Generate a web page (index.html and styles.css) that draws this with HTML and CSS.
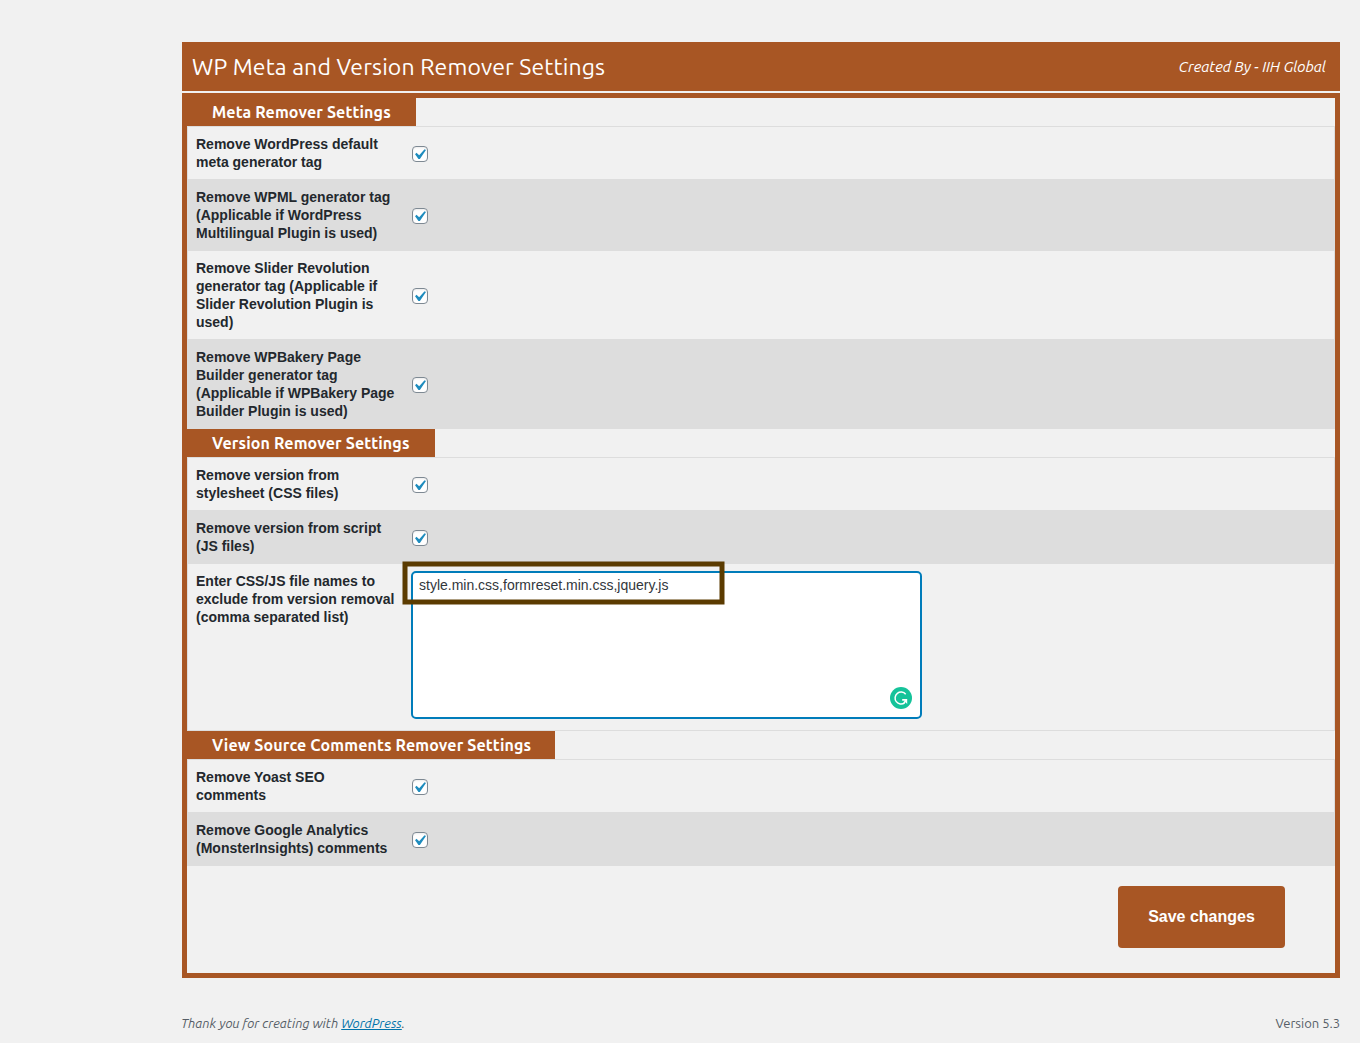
FILE: index.html
```html
<!DOCTYPE html>
<html lang="en">
<head>
<meta charset="utf-8">
<title>WP Meta and Version Remover Settings</title>
<link rel="stylesheet" href="styles.css">
</head>
<body>
<svg class="defs" aria-hidden="true"><symbol id="check" viewBox="0 0 20 20"><path d="M14.83 4.89l1.34.94-5.81 8.38H9.02L5.78 9.67l1.34-1.25 2.57 2.4z"/></symbol></svg>
<main class="wrap">
  <header class="banner">
    <h1 class="banner-title">WP Meta and Version Remover Settings</h1>
    <span class="banner-by">Created By - IIH Global</span>
  </header>
  <form class="panel">
    <h2 class="tab tab-meta">Meta Remover Settings</h2>
    <div class="table">
      <div class="row"><label class="label">Remove WordPress default meta generator tag</label><span class="box"><svg class="tick"><use href="#check"/></svg></span></div>
      <div class="row alt"><label class="label">Remove WPML generator tag (Applicable if WordPress Multilingual Plugin is used)</label><span class="box"><svg class="tick"><use href="#check"/></svg></span></div>
      <div class="row"><label class="label">Remove Slider Revolution generator tag (Applicable if Slider Revolution Plugin is used)</label><span class="box"><svg class="tick"><use href="#check"/></svg></span></div>
      <div class="row alt"><label class="label">Remove WPBakery Page Builder generator tag (Applicable if WPBakery Page Builder Plugin is used)</label><span class="box"><svg class="tick"><use href="#check"/></svg></span></div>
    </div>
    <h2 class="tab tab-version">Version Remover Settings</h2>
    <div class="table closed">
      <div class="row"><label class="label">Remove version from stylesheet (CSS files)</label><span class="box"><svg class="tick"><use href="#check"/></svg></span></div>
      <div class="row alt"><label class="label">Remove version from script (JS files)</label><span class="box"><svg class="tick"><use href="#check"/></svg></span></div>
      <div class="row tall"><label class="label">Enter CSS/JS file names to exclude from version removal (comma separated list)</label>
        <div class="field">style.min.css,formreset.min.css,jquery.js
          <svg class="highlight" viewBox="0 0 323 44"><rect x="3" y="3" width="317" height="38" fill="none" stroke="#5b3b00" stroke-width="5"/></svg>
          <svg class="grammar" viewBox="0 0 22 22"><circle cx="11" cy="11" r="11" fill="#15c39a"/><path d="M15.7 7.2A6 6 0 1 0 14.6 15.9" fill="none" stroke="#fff" stroke-width="1.5"/><path d="M12.2 11.9H17.2V16.9L15.6 15.3 14.3 16.4 13.4 15.2 14.7 13.7H12.2z" fill="#fff"/></svg>
        </div>
      </div>
    </div>
    <h2 class="tab tab-comments">View Source Comments Remover Settings</h2>
    <div class="table">
      <div class="row"><label class="label">Remove Yoast SEO comments</label><span class="box"><svg class="tick"><use href="#check"/></svg></span></div>
      <div class="row alt"><label class="label">Remove Google Analytics (MonsterInsights) comments</label><span class="box"><svg class="tick"><use href="#check"/></svg></span></div>
    </div>
    <div class="actions"><button class="save" type="button">Save changes</button></div>
  </form>
  <footer class="footer">
    <span class="thanks">Thank you for creating with <a class="link" href="#">WordPress</a>.</span>
    <span class="version">Version 5.3</span>
  </footer>
</main>
</body>
</html>
```
FILE: styles.css
```css
* { box-sizing: border-box; }
body { margin: 0; background: #f1f1f1; color: #23282d; font-family: Ubuntu, "Noto Sans", sans-serif; height: 1043px; overflow: hidden; }
.defs { display: none; }
.wrap { padding: 42px 20px 0 182px; }
.banner { height: 49px; padding: 0 14px 0 10px; background: #a85624; color: #fff; display: flex; align-items: center; justify-content: space-between; white-space: nowrap; }
.banner-title { margin: 0; font-size: 23px; font-weight: 400; line-height: 30px; letter-spacing: .14px; }
.banner-by { font-size: 15px; font-style: italic; }
.panel { margin-top: 2px; height: 885px; border: 5px solid #a85624; }
.tab { margin: 0; height: 28px; padding-left: 25px; background: #a85624; color: #fff; font-size: 16px; line-height: 28px; font-weight: 700; letter-spacing: .13px; white-space: nowrap; }
.tab-meta { width: 229px; }
.tab-version { width: 248px; }
.tab-comments { width: 368px; }
.table { border: 1px solid #ddd; border-bottom: 0; }
.table.closed { border-bottom: 1px solid #ddd; }
.row { display: flex; align-items: center; padding: 8px; font-family: "Liberation Sans", Arial, sans-serif; }
.row.alt { background: #ddd; padding: 9px 8px; }
.row.tall { align-items: flex-start; height: 166px; }
.label { width: 200px; margin-right: 16px; flex: none; font-size: 14px; line-height: 18px; font-weight: 700; }
.box { width: 16px; height: 16px; margin-top: 2px; border: 1px solid #7e8993; border-radius: 4px; background: #fff; display: flex; box-shadow: inset 0 1px 2px rgba(0,0,0,.08); }
.tick { width: 21px; height: 21px; margin: -3px 0 0 -4px; flex: none; fill: #1e8cbe; }
.field { position: relative; width: 511px; height: 148px; margin: -1px 0 0 -1px; padding: 2px 6px; background: #fff; border: 2px solid #007cba; border-radius: 5px; color: #32373c; font-size: 14px; line-height: 20px; }
.highlight { position: absolute; left: -11px; top: -12px; width: 323px; height: 44px; }
.grammar { position: absolute; left: 477px; top: 114px; width: 22px; height: 22px; }
.actions { display: flex; justify-content: flex-end; padding: 20px 50px 0 0; }
.save { width: 167px; height: 62px; border: 0; border-radius: 4px; background: #a85624; color: #fff; font: 700 16px "Liberation Sans", Arial, sans-serif; }
.footer { display: flex; justify-content: space-between; margin: 35px 0 0 -1px; font-size: 13px; line-height: 20px; color: #555d66; white-space: nowrap; }
.thanks { font-style: italic; }
.link { color: #0073aa; }
```
